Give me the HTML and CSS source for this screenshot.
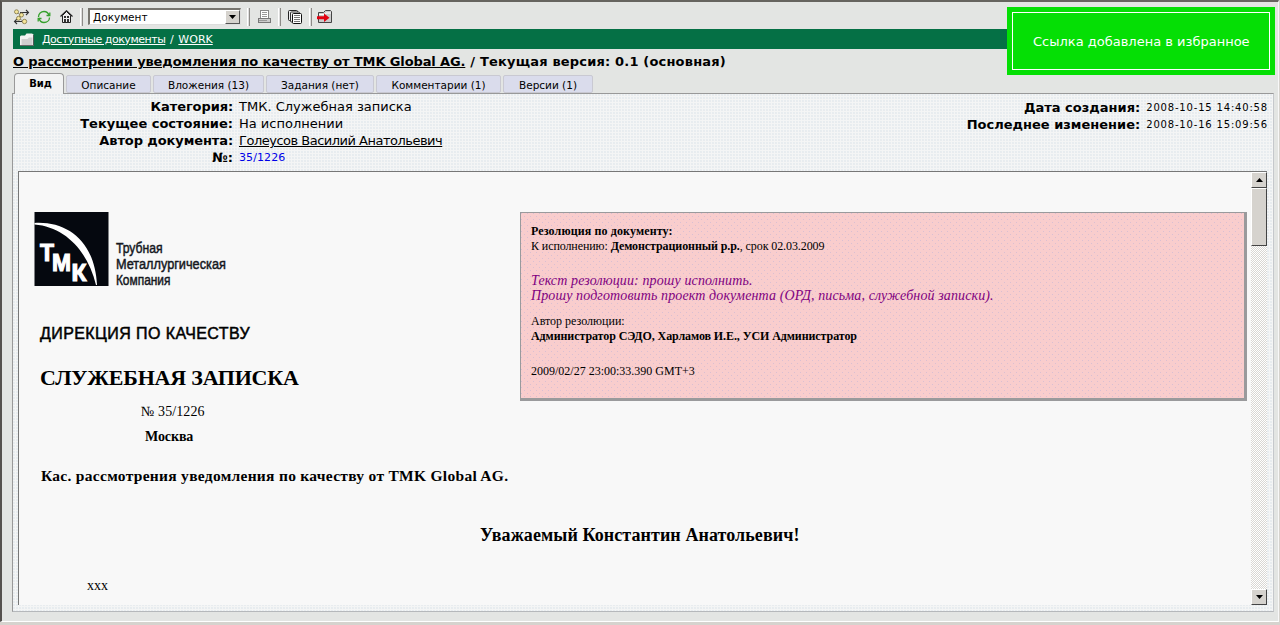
FILE: index.html
```html
<!DOCTYPE html>
<html lang="ru">
<head>
<meta charset="utf-8">
<title>Служебная записка</title>
<link rel="stylesheet" href="styles.css">
</head>
<body>
<div class="window">
  <div class="toolbar">
    <svg class="ico tree" width="17" height="16" viewBox="0 0 17 16"><path d="M7 3.500h8M13 1l2.500 2.500L13 6M9 12.500H1.500M4 10l-2.500 2.500L4 15" fill="none" stroke="#333" stroke-width="1.100"/><path d="M3 3 8 6 5 9l6 3.500" fill="none" stroke="#555" stroke-dasharray="1 1"/><g fill="#f5e69a" stroke="#7d7242" stroke-width=".8"><circle cx="3.500" cy="2.800" r="2"/><circle cx="8.500" cy="6" r="2"/><circle cx="5.500" cy="9.300" r="2"/><circle cx="11.500" cy="12.500" r="2.200"/></g></svg>
    <svg class="ico sync" width="14" height="14" viewBox="0 0 14 14"><g fill="none" stroke="#35a02c" stroke-width="1.300"><path d="M1.500 7C1.500 3.500 4 1.500 7 1.500c2.500 0 4.500 1.700 5.200 4.500M12.500 7.500c0 3-2.500 5-5.500 5-2.500 0-4.500-1.700-5.200-4.500"/><path d="M9.500 5.500h3.300V2.500M4.500 8.500H1.200v3"/></g></svg>
    <svg class="ico home" width="13" height="13" viewBox="0 0 13 13"><path d="M2.500 5.500v7h8v-7l-4-4z" fill="#eee" stroke="#222"/><path d="M.5 6.500 6.500.8l6 5.700" fill="none" stroke="#222" stroke-width="1.200"/><path d="M4 6h2v2H4zM7 6h2v2H7zM4 9h2v3.500H4zM7 9h2v3.500H7z" fill="#333"/></svg>
    <i class="sep s1"></i>
    <div class="select"><span class="t-select">Документ</span><span class="drop"><svg width="7" height="4"><path d="M0 0h7L3.500 4z"/></svg></span></div>
    <i class="sep s2"></i>
    <svg class="ico print" width="14" height="14" viewBox="0 0 14 14" shape-rendering="crispEdges"><path d="M2.500 8V.5h8V8" fill="#fff" stroke="#888"/><path d="M4 2.500h5M4 4.500h5M4 6.500h5" stroke="#999"/><path d="M.5 12.500v-4h12v4z" fill="#ccc" stroke="#777"/><path d="M1 10.500h8" stroke="#999"/></svg>
    <i class="sep s3"></i>
    <svg class="ico copy" width="15" height="14" viewBox="0 0 15 14"><rect x=".5" y=".5" width="9" height="10" rx="1" fill="#eee" stroke="#222"/><rect x="2.500" y="2" width="9" height="10" rx="1" fill="#eee" stroke="#333"/><rect x="4.500" y="3.500" width="9" height="10" rx="1" fill="#fff" stroke="#111"/><path d="M6 5.500h6M6 7.500h6M6 9.500h6M6 11.500h6" stroke="#777"/></svg>
    <i class="sep s4"></i>
    <svg class="ico fav" width="16" height="15" viewBox="0 0 16 15"><path d="M1.500 13.500v-10h5l2-2h5l1 1v11z" fill="#ccc" stroke="#444"/><path d="M2 5.500h6l1-1.500h5" fill="none" stroke="#fff"/><path d="M0 7.200h7V4.500L12.500 8.700 7 13v-2.800H0z" fill="#e00010"/></svg>
  </div>

  <div class="crumbs">
    <svg class="folder" width="14" height="13" viewBox="0 0 14 13"><path d="M0 13V3.500L1 2.500h4L6.500.5H12l1.500 1V13z" fill="#f2f2f2"/><path d="M1.500 12V6h6L9 4.500h3.500V12z" fill="#cfcfcf"/><path d="M0 12.500h13.500V2" fill="none" stroke="#444" stroke-width=".8"/></svg>
    <a class="t-c1">Доступные документы</a><span class="slash">/</span><a class="t-c2">WORK</a>
  </div>
  <div class="title"><a class="t-h1">О рассмотрении уведомления по качеству от TMK Global AG.</a><span class="t-h2">/ Текущая версия: 0.1 (основная)</span></div>

  <div class="tabs">
    <div class="tab active"><span>Вид</span></div>
    <div class="tab w1"><span>Описание</span></div>
    <div class="tab w2"><span>Вложения (13)</span></div>
    <div class="tab w3"><span>Задания (нет)</span></div>
    <div class="tab w4"><span>Комментарии (1)</span></div>
    <div class="tab w5"><span>Версии (1)</span></div>
  </div>

  <div class="panel">
    <div class="info">
      <div class="props">
        <b class="k1">Категория:</b><span class="v1">ТМК. Служебная записка</span>
        <b class="k2">Текущее состояние:</b><span class="v2">На исполнении</span>
        <b class="k3">Автор документа:</b><a class="v3">Голеусов Василий Анатольевич</a>
        <b class="k4">№:</b><span class="num">35/1226</span>
      </div>
      <div class="dates">
        <b class="k5">Дата создания:</b><span>2008-10-15 14:40:58</span>
        <b class="k6">Последнее изменение:</b><span>2008-10-16 15:09:56</span>
      </div>
    </div>
    <div class="frame">
      <div class="doc">
        <div class="head">
          <div class="left">
            <svg class="logo" width="260" height="78" viewBox="0 0 260 78">
              <rect x=".5" width="74" height="74" fill="#05080f"/>
              <path d="M.5 11C34 9 61 30 63 73h-1C54 40 32 15 .5 12.500z" fill="#fff"/>
              <g class="mark"><text x="6" y="49" textLength="14" lengthAdjust="spacingAndGlyphs">Т</text><text x="18" y="59" textLength="19" lengthAdjust="spacingAndGlyphs">М</text><text x="37.500" y="68.500" textLength="15" lengthAdjust="spacingAndGlyphs">К</text></g>
              <g class="brand" transform="scale(.78 1)"><text x="105" y="41" textLength="60" lengthAdjust="spacingAndGlyphs">Трубная</text><text x="105" y="57" textLength="141" lengthAdjust="spacingAndGlyphs">Металлургическая</text><text x="105" y="73" textLength="70" lengthAdjust="spacingAndGlyphs">Компания</text></g>
            </svg>
            <div class="dept"><span>ДИРЕКЦИЯ ПО КАЧЕСТВУ</span></div>
            <div class="kind"><span>СЛУЖЕБНАЯ ЗАПИСКА</span></div>
            <div class="docno"><span>№ 35/1226</span></div>
            <div class="city"><span>Москва</span></div>
          </div>
          <div class="resolution">
            <p><b class="r1">Резолюция по документу:</b></p>
            <p><span class="r2">К исполнению: <b>Демонстрационный р.р.</b>, срок 02.03.2009</span></p>
            <p class="it first"><span class="r3">Текст резолюции: прошу исполнить.</span></p>
            <p class="it"><span class="r4">Прошу подготовить проект документа (ОРД, письма, служебной записки).</span></p>
            <p class="by"><span class="r5">Автор резолюции:</span></p>
            <p><b class="r6">Администратор СЭДО, Харламов И.Е., УСИ Администратор</b></p>
            <p class="when"><span class="r7">2009/02/27 23:00:33.390 GMT+3</span></p>
          </div>
        </div>
        <div class="subject"><span>Кас. рассмотрения уведомления по качеству от TMK Global AG.</span></div>
        <div class="greet"><span>Уважаемый Константин Анатольевич!</span></div>
        <div class="body"><span>xxx</span></div>
      </div>
      <div class="scroll">
        <div class="btn"><svg width="7" height="4"><path d="M0 4h7L3.500 0z"/></svg></div>
        <div class="thumb"></div>
        <div class="btn end"><svg width="7" height="4"><path d="M0 0h7L3.500 4z"/></svg></div>
      </div>
    </div>
  </div>
  <div class="toast"><div class="toast-in"><span>Ссылка добавлена в избранное</span></div></div>
</div>
</body>
</html>
```
FILE: styles.css
```css
* { box-sizing: border-box; }
body { margin: 0; background: #d6d3ce; font-family: "DejaVu Sans", sans-serif; color: #000; overflow: hidden; }
p { margin: 0; }
a { text-decoration: underline; }
span, b, a { white-space: nowrap; }
.window { position: relative; width: 1279px; height: 622px; padding: 2px 5px 0 11px; background: #e3e5e3; border: 2px solid #55524f; border-top-color: #66645f; border-right: 1px solid #f8f8f8; border-bottom: 1px solid #fff; }

.toolbar { display: flex; height: 25px; align-items: center; }
.ico { flex: none; display: block; }
.sync { margin-left: 7px; }
.home { margin-left: 9px; }
.sep { width: 3px; height: 18px; border-left: 1px solid #fff; border-right: 1px solid #8d8b88; background: #ddd; }
.s1 { margin-left: 7px; }
.select { display: flex; width: 153px; height: 17px; margin-left: 5px; padding-left: 3px; border: 1px solid #77756f; border-top-width: 2px; border-left-width: 2px; border-right-color: #ddd; border-bottom-color: #ddd; background: #fff; font-size: 10.5px; line-height: 15px; justify-content: space-between; }
.drop { display: flex; align-items: center; justify-content: center; width: 15px; height: 14px; background: #d6d3ce; border: 1px solid #fff; border-right-color: #555; border-bottom-color: #555; }
.s2 { margin-left: 6px; }
.print { margin-left: 8px; }
.s3 { margin-left: 6px; }
.copy { margin-left: 7px; }
.s4 { margin-left: 6px; }
.fav { margin-left: 5px; }

.crumbs { display: flex; align-items: center; height: 20px; width: 1254px; padding-left: 7px; background: #057045; color: #fff; font-size: 11px; }
.folder { margin-right: 8px; }
.t-c1 { letter-spacing: -0.48px; }
.slash { width: 13px; text-align: center; }
.title { display: flex; height: 25px; line-height: 25px; font-size: 13px; font-weight: bold; gap: 5px; }
.t-h1 { letter-spacing: -0.125px; }
.t-h2 { letter-spacing: 0.18px; }

.tabs { display: flex; height: 19px; align-items: flex-start; gap: 2px; padding-left: 1px; position: relative; z-index: 1; }
.tab { height: 18px; margin-top: 1px; font-size: 10.5px; line-height: 18px; text-align: center; background: #dadcec; border: 1px solid #c9c9d2; border-radius: 2px; }
.active { width: 50px; height: 21px; margin-top: -1px; padding: 1px 0 0 3px; font-size: 10px; font-weight: bold; background: #f2f3f3; border: 1px solid #999; border-bottom: 0; border-radius: 4px 4px 0 0; }
.w1 { width: 85px; margin-left: 1px; margin-left: 0; }
.w2 { width: 111px; }
.w3 { width: 108px; }
.w4 { width: 125px; }
.w5 { width: 90px; }

.panel { width: 1262px; height: 519px; margin-left: -1px; padding: 4px 5px 0; border: 1px solid #999; border-right-color: #c5c8cc; border-bottom-color: #b5b8bb; background-color: #f4f5f5; background-image: radial-gradient(circle at 1px 1px, #e4eaee 0.6px, transparent 1px); background-size: 3px 3px; }
.info { display: flex; justify-content: space-between; height: 73px; font-size: 13px; line-height: 17px; }
.props, .dates { display: grid; grid-auto-rows: 17px; column-gap: 6px; }
.props { grid-template-columns: 215px auto; }
.dates { grid-template-columns: auto auto; height: 34px; margin-top: 1px; column-gap: 6px; }
.info b { text-align: right; justify-self: end; }
.v3 { letter-spacing: -0.5px; }
.k1, .k3 { letter-spacing: -0.1px; }
.num { color: #0000e8; font-size: 11px; letter-spacing: 0.1px; }
.dates span { font-size: 10px; letter-spacing: 0.82px; }

.frame { display: flex; height: 434px; border-top: 1px solid #777; border-left: 1px solid #777; background: #f8f8f8; width: 1249px; }
.doc { width: 1232px; font-family: "Liberation Serif", serif; }
.head { display: flex; height: 294px; }
.left { width: 501px; padding: 40px 0 0 15px; }
.logo { display: block; }
.mark { font: bold 23px "Liberation Sans", sans-serif; fill: #fff; stroke: #fff; stroke-width: 1.1px; }
.brand { font: 15.5px "Liberation Sans", sans-serif; fill: #15181e; stroke: #15181e; stroke-width: .5px; }
.dept { margin: 34px 0 0 6px; font: 16px/20px "Liberation Sans", sans-serif; letter-spacing: 0.41px; -webkit-text-stroke: .5px #000; }
.kind { margin: 20px 0 0 6px; font-size: 22px; font-weight: bold; line-height: 28px; letter-spacing: -0.2px; }
.docno { margin: 11px 0 0 107px; font-size: 14px; line-height: 18px; letter-spacing: 0.1px; }
.city { margin: 7px 0 0 111px; font-size: 14px; font-weight: bold; line-height: 18px; letter-spacing: -0.1px; }
.resolution { width: 727px; height: 189px; margin-top: 40px; padding: 11px 10px; border: 1px solid #9a9a9c; border-right-width: 3px; border-bottom-width: 3px; background-color: #f9cdcd; background-image: linear-gradient(#dcbfd0, #dcbfd0), linear-gradient(#dcbfd0, #dcbfd0); background-size: 1px 1px; background: conic-gradient(from 270deg at 1px 1px, #d9bfd2 25%, transparent 0) 0 0 / 6px 6px, conic-gradient(from 270deg at 1px 1px, #d9bfd2 25%, transparent 0) 3px 3px / 6px 6px, #f9cdcd; font-size: 12px; line-height: 15px; }
.r1 { letter-spacing: 0.12px; }
.r2 { letter-spacing: -0.09px; }
.it { color: #800080; font-size: 14px; font-style: italic; line-height: 15px; }
.r3, .r4 { letter-spacing: 0.12px; }
.r6 { letter-spacing: -0.08px; }
.first { margin-top: 19px; }
.by { margin-top: 11px; }
.when { margin-top: 20px; }
.subject { padding-left: 22px; font-size: 15.5px; font-weight: bold; line-height: 20px; letter-spacing: 0.29px; }
.greet { margin-top: 37px; padding-left: 461px; font-size: 18px; font-weight: bold; line-height: 24px; letter-spacing: 0.08px; }
.body { margin-top: 30px; padding-left: 68px; font-size: 14px; line-height: 18px; }

.scroll { display: flex; flex-direction: column; width: 16px; background: repeating-conic-gradient(#fff 0 25%, #d9d7d3 0 50%) 0 0 / 2px 2px; }
.btn, .thumb { background: #d6d3ce; border: 1px solid #fff; border-right: 1px solid #444; border-bottom: 1px solid #444; }
.btn { display: flex; align-items: center; justify-content: center; height: 16px; }
.thumb { height: 58px; }
.end { margin-top: auto; }

.toast { position: absolute; left: 1005px; top: 5px; width: 268px; height: 68px; padding: 5px; background: #05df05; }
.toast-in { height: 58px; border: 1px solid #fff; color: #fff; font-size: 13px; line-height: 58px; padding-left: 20px; }
```
